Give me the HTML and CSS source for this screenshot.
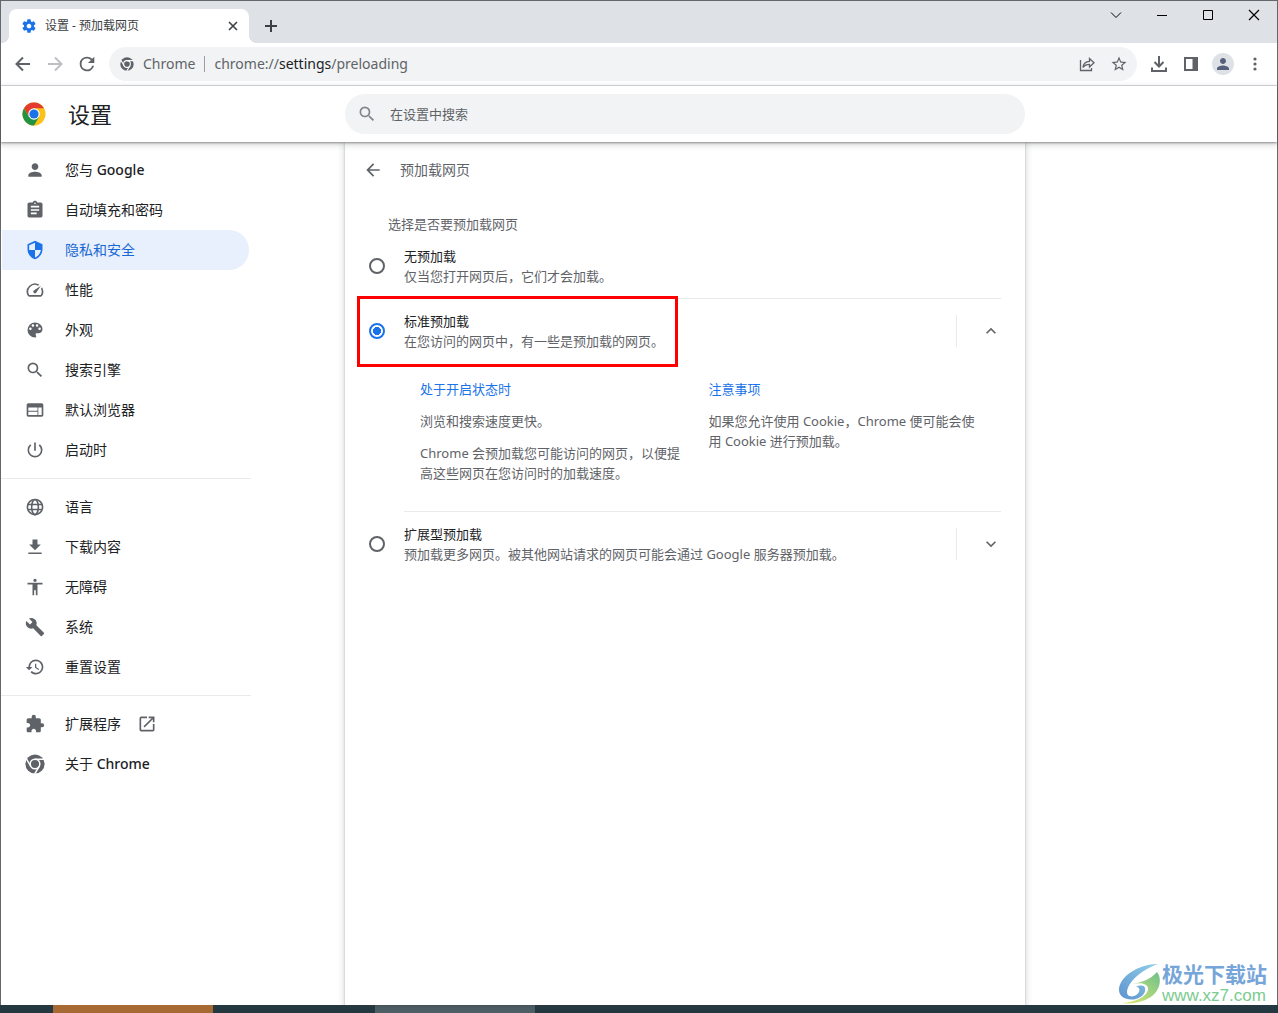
FILE: index.html
```html
<!DOCTYPE html>
<html lang="zh-CN">
<head>
<meta charset="utf-8">
<title>设置 - 预加载网页</title>
<link rel="stylesheet" href="styles.css">
</head>
<body>
<svg class="symbols" aria-hidden="true">
  <symbol id="chrome-mono" viewBox="0 0 20 20">
    <circle cx="10" cy="10" r="9.6"/>
    <g fill="none" stroke="#fff" stroke-width="1.5"><circle cx="10" cy="10" r="4.8"/><path d="M10 5.2h9M5.8 12.4L1.3 4.6M14.2 12.4L9.7 20"/></g>
  </symbol>
  <symbol id="search" viewBox="0 0 24 24"><path d="M15.5 14h-.79l-.28-.27A6.47 6.47 0 0 0 16 9.5 6.5 6.5 0 1 0 9.5 16c1.61 0 3.09-.59 4.23-1.57l.27.28v.79l5 4.99L20.49 19l-4.99-5zm-6 0C7.01 14 5 11.99 5 9.5S7.01 5 9.5 5 14 7.01 14 9.5 11.99 14 9.5 14z"/></symbol>
  <symbol id="back" viewBox="0 0 24 24"><path d="M20 11H7.83l5.59-5.59L12 4l-8 8 8 8 1.41-1.41L7.83 13H20v-2z"/></symbol>
  <symbol id="person" viewBox="0 0 24 24"><path d="M12 12c2.21 0 4-1.79 4-4s-1.79-4-4-4-4 1.79-4 4 1.79 4 4 4zm0 2c-2.67 0-8 1.34-8 4v2h16v-2c0-2.66-5.33-4-8-4z"/></symbol>
</svg>

<div class="window">
  <div class="tab-strip">
    <div class="tab">
      <svg class="tab-icon" viewBox="0 0 24 24"><path d="M19.43 12.98c.04-.32.07-.64.07-.98s-.03-.66-.07-.98l2.11-1.65c.19-.15.24-.42.12-.64l-2-3.46c-.12-.22-.39-.3-.61-.22l-2.49 1c-.52-.4-1.08-.73-1.69-.98l-.38-2.65A.49.49 0 0 0 14 2h-4c-.25 0-.46.18-.49.42l-.38 2.65c-.61.25-1.17.59-1.69.98l-2.49-1c-.23-.09-.49 0-.61.22l-2 3.46c-.13.22-.07.49.12.64l2.11 1.65c-.04.32-.07.65-.07.98s.03.66.07.98l-2.11 1.65c-.19.15-.24.42-.12.64l2 3.46c.12.22.39.3.61.22l2.49-1c.52.4 1.08.73 1.69.98l.38 2.65c.03.24.24.42.49.42h4c.25 0 .46-.18.49-.42l.38-2.65c.61-.25 1.17-.59 1.69-.98l2.49 1c.23.09.49 0 .61-.22l2-3.46c.12-.22.07-.49-.12-.64l-2.11-1.65zM12 15.5c-1.93 0-3.5-1.57-3.5-3.5s1.57-3.5 3.5-3.5 3.5 1.57 3.5 3.5-1.57 3.5-3.5 3.5z"/></svg>
      <span class="tab-title">设置 - 预加载网页</span>
      <button class="tab-close" aria-label="关闭标签页"><svg class="i16" viewBox="0 0 16 16"><path class="line" stroke-width="1.6" d="M4 4l8 8M12 4l-8 8"/></svg></button>
    </div>
    <button class="new-tab" aria-label="打开新的标签页"><svg class="i16" viewBox="0 0 16 16"><path class="line" stroke-width="2" d="M8 2v12M2 8h12"/></svg></button>
    <div class="window-controls">
      <button aria-label="搜索标签页"><svg class="i16" viewBox="0 0 16 16"><path class="line" d="M3 5.500l5 5 5-5"/></svg></button>
      <button aria-label="最小化"><svg class="i16" viewBox="0 0 16 16"><path class="line" d="M3 8.500h10"/></svg></button>
      <button aria-label="最大化"><svg class="i16" viewBox="0 0 16 16"><path class="line" d="M3.500 3.500h9v9h-9z"/></svg></button>
      <button aria-label="关闭"><svg class="i16" viewBox="0 0 16 16"><path class="line" stroke-width="1.200" d="M3 3l10 10M13 3L3 13"/></svg></button>
    </div>
  </div>

  <div class="toolbar">
    <button aria-label="后退"><svg class="i20" viewBox="0 0 20 20"><path class="line" stroke-width="2" d="M17 10H4M10 3.500L3.500 10l6.500 6.500"/></svg></button>
    <button class="disabled" aria-label="前进" disabled><svg class="i20" viewBox="0 0 20 20"><path class="line" stroke-width="2" d="M3 10h13M10 3.500l6.500 6.500-6.500 6.500"/></svg></button>
    <button aria-label="重新加载"><svg class="i22" viewBox="0 0 24 24"><path d="M17.65 6.35A7.96 7.96 0 0 0 12 4a8 8 0 1 0 7.73 10h-2.08A6 6 0 1 1 12 6c1.66 0 3.14.69 4.22 1.780L13 11h7V4l-2.35 2.350z"/></svg></button>
    <div class="omnibox">
      <svg class="i14" viewBox="0 0 20 20"><use href="#chrome-mono"/></svg>
      <span class="site">Chrome</span>
      <span class="url">chrome://<b>settings</b>/preloading</span>
      <button aria-label="分享此网页"><svg class="i18" viewBox="0 0 18 18"><path class="line" stroke-width="1.300" d="M2.500 5v10.500h11V13M5 12.500c.4-4 2.500-6 6.500-6.200V3.500L16 7.700 11.500 12V9.300C8.500 9.300 6.500 10.300 5 12.500z"/></svg></button>
      <button aria-label="为此标签页添加书签"><svg class="i18" viewBox="0 0 24 24"><path d="M22 9.240l-7.190-.62L12 2 9.190 8.630 2 9.240l5.460 4.730L5.820 21 12 17.270 18.180 21l-1.630-7.030L22 9.240zM12 15.400l-3.760 2.270 1-4.280-3.320-2.880 4.380-.38L12 6.100l1.710 4.040 4.380.38-3.320 2.880 1 4.280L12 15.400z"/></svg></button>
    </div>
    <button aria-label="下载内容"><svg class="i20" viewBox="0 0 20 20"><path class="line" stroke-width="2" d="M10 2v10M5.500 8l4.500 4.500L14.500 8M3 13.500V17h14v-3.500"/></svg></button>
    <button aria-label="侧边栏"><svg class="i16" viewBox="0 0 16 16"><path d="M1 1h14v14H1zM3 3v10h6.500V3z" fill-rule="evenodd"/></svg></button>
    <button aria-label="您"><span class="avatar"><svg class="i18" viewBox="0 0 24 24"><use href="#person"/></svg></span></button>
    <button aria-label="更多"><svg class="i16" viewBox="0 0 16 16"><circle cx="8" cy="3" r="1.600"/><circle cx="8" cy="8" r="1.600"/><circle cx="8" cy="13" r="1.600"/></svg></button>
  </div>

  <header class="page-header">
    <div class="brand">
      <svg class="i24" viewBox="0 0 24 24"><circle cx="12" cy="12" r="11.500" fill="#fbc116"/><path fill="#e33b2e" d="M2.040 6.250A11.500 11.500 0 0 1 21.960 6.250H12L7 14.900z"/><path fill="#229342" d="M2.040 6.250A11.500 11.500 0 0 0 12 23.500L17 14.900 7 14.900z"/><circle cx="12" cy="12" r="5.750" fill="#fff"/><circle cx="12" cy="12" r="4.600" fill="#1a73e8"/></svg>
      <h1>设置</h1>
    </div>
    <div class="search">
      <svg class="i20" viewBox="0 0 24 24"><use href="#search"/></svg>
      <input type="search" aria-label="在设置中搜索" placeholder="在设置中搜索">
    </div>
  </header>

  <div class="body">
    <nav class="sidebar">
      <a href="#people"><svg class="i20" viewBox="0 0 24 24"><use href="#person"/></svg><span>您与 <span class="latin">Google</span></span></a>
      <a href="#autofill"><svg class="i20" viewBox="0 0 24 24"><path d="M19 3h-4.180C14.400 1.840 13.300 1 12 1s-2.400.84-2.820 2H5c-1.100 0-2 .9-2 2v14c0 1.100.9 2 2 2h14c1.100 0 2-.9 2-2V5c0-1.100-.9-2-2-2zm-7 0c.55 0 1 .45 1 1s-.45 1-1 1-1-.45-1-1 .45-1 1-1zm2 14H7v-2h7v2zm3-4H7v-2h10v2zm0-4H7V7h10v2z"/></svg>自动填充和密码</a>
      <a href="#privacy" class="current" aria-current="page"><svg class="i20" viewBox="0 0 24 24"><path d="M12 1L3 5v6c0 5.550 3.840 10.740 9 12 5.160-1.260 9-6.450 9-12V5l-9-4zm0 10.990h7c-.53 4.120-3.280 7.790-7 8.940V12H5V6.300l7-3.110v8.800z"/></svg>隐私和安全</a>
      <a href="#performance"><svg class="i20" viewBox="0 0 24 24"><path d="M20.380 8.570l-1.230 1.850a8 8 0 0 1-.22 7.580H5.070A8 8 0 0 1 15.580 6.850l1.850-1.230A10 10 0 0 0 3.350 19a2 2 0 0 0 1.720 1h13.850a2 2 0 0 0 1.740-1 10 10 0 0 0-.27-10.440zm-9.790 6.840a2 2 0 0 0 2.830 0l5.660-8.490-8.490 5.660a2 2 0 0 0 0 2.830z"/></svg>性能</a>
      <a href="#appearance"><svg class="i20" viewBox="0 0 24 24"><path d="M12 3a9 9 0 0 0 0 18c.83 0 1.500-.67 1.500-1.500 0-.39-.15-.74-.39-1.010-.23-.26-.38-.61-.38-.99 0-.83.67-1.500 1.500-1.500H16c2.760 0 5-2.240 5-5 0-4.420-4.030-8-9-8zm-5.500 9c-.83 0-1.500-.67-1.500-1.500S5.670 9 6.500 9 8 9.670 8 10.500 7.330 12 6.500 12zm3-4C8.670 8 8 7.330 8 6.500S8.670 5 9.500 5s1.500.67 1.500 1.500S10.330 8 9.500 8zm5 0c-.83 0-1.500-.67-1.500-1.500S13.670 5 14.500 5s1.500.67 1.500 1.500S15.330 8 14.500 8zm3 4c-.83 0-1.500-.67-1.500-1.500S16.670 9 17.500 9s1.500.67 1.500 1.500-.67 1.500-1.500 1.500z"/></svg>外观</a>
      <a href="#search-engine"><svg class="i20" viewBox="0 0 24 24"><use href="#search"/></svg>搜索引擎</a>
      <a href="#default-browser"><svg class="i20" viewBox="0 0 24 24"><path d="M20 4H4c-1.100 0-1.990.9-1.990 2L2 18c0 1.100.9 2 2 2h16c1.100 0 2-.9 2-2V6c0-1.100-.9-2-2-2zm-5 14H4v-4h11v4zm0-5H4V9h11v4zm5 5h-4V9h4v9z"/></svg>默认浏览器</a>
      <a href="#on-startup"><svg class="i20" viewBox="0 0 24 24"><path d="M13 3h-2v10h2V3zm4.830 2.170l-1.420 1.420A6.920 6.920 0 0 1 19 12a7 7 0 1 1-11.420-5.420L6.170 5.170A8.930 8.930 0 0 0 3 12a9 9 0 0 0 18 0c0-2.740-1.230-5.180-3.170-6.830z"/></svg>启动时</a>
      <hr>
      <a href="#languages"><svg class="i20" viewBox="0 0 24 24"><g class="line" stroke-width="1.900"><circle cx="12" cy="12" r="9.100"/><ellipse cx="12" cy="12" rx="4" ry="9.100"/><path d="M3.800 9h16.400M3.800 15h16.400"/></g></svg>语言</a>
      <a href="#downloads"><svg class="i20" viewBox="0 0 24 24"><path d="M19 9h-4V3H9v6H5l7 7 7-7zM4 18.500v2h16v-2H4z"/></svg>下载内容</a>
      <a href="#accessibility"><svg class="i20" viewBox="0 0 24 24"><path d="M12 2c1.100 0 2 .9 2 2s-.9 2-2 2-2-.9-2-2 .9-2 2-2zm9 7h-6v13h-2v-6h-2v6H9V9H3V7h18v2z"/></svg>无障碍</a>
      <a href="#system"><svg class="i20" viewBox="0 0 24 24"><path d="M22.700 19l-9.100-9.100c.9-2.300.4-5-1.500-6.900-2-2-5-2.400-7.400-1.300L9 6 6 9 1.600 4.700C.4 7.100.9 10.100 2.900 12.100c1.900 1.900 4.600 2.400 6.900 1.500l9.100 9.100c.4.4 1 .4 1.400 0l2.300-2.300c.5-.4.5-1.100.1-1.400z"/></svg>系统</a>
      <a href="#reset"><svg class="i20" viewBox="0 0 24 24"><path d="M13 3a9 9 0 0 0-9 9H1l3.890 3.890.07.14L9 12H6a7 7 0 1 1 2.060 4.940l-1.420 1.420A9 9 0 1 0 13 3zm-1 5v5l4.280 2.540.72-1.210-3.500-2.080V8H12z"/></svg>重置设置</a>
      <hr>
      <a href="#extensions"><svg class="i20" viewBox="0 0 24 24"><path d="M20.500 11H19V7c0-1.100-.9-2-2-2h-4V3.500a2.500 2.500 0 0 0-5 0V5H4c-1.100 0-1.990.9-1.990 2v3.800H3.500c1.490 0 2.700 1.210 2.700 2.700s-1.210 2.700-2.700 2.700H2V20c0 1.100.9 2 2 2h3.800v-1.500c0-1.490 1.210-2.700 2.700-2.700s2.700 1.210 2.700 2.700V22H17c1.100 0 2-.9 2-2v-4h1.500a2.500 2.500 0 0 0 0-5z"/></svg>扩展程序<svg class="i20 external" viewBox="0 0 24 24"><path d="M19 19H5V5h7V3H5a2 2 0 0 0-2 2v14a2 2 0 0 0 2 2h14c1.100 0 2-.9 2-2v-7h-2v7zM14 3v2h3.590l-9.830 9.830 1.410 1.410L19 6.410V10h2V3h-7z"/></svg></a>
      <a href="#about"><svg class="i20" viewBox="0 0 20 20"><use href="#chrome-mono"/></svg><span>关于 <span class="latin">Chrome</span></span></a>
    </nav>

    <main class="card">
      <div class="subpage-header">
        <button aria-label="返回"><svg class="i20" viewBox="0 0 24 24"><use href="#back"/></svg></button>
        <h2>预加载网页</h2>
      </div>
      <fieldset>
        <legend>选择是否要预加载网页</legend>
        <div class="option">
          <input type="radio" name="preload" id="preload-off">
          <div class="option-row">
            <label for="preload-off"><strong>无预加载</strong><span>仅当您打开网页后，它们才会加载。</span></label>
          </div>
        </div>
        <div class="option highlighted">
          <input type="radio" name="preload" id="preload-standard" checked>
          <div class="option-row">
            <label for="preload-standard"><strong>标准预加载</strong><span>在您访问的网页中，有一些是预加载的网页。</span></label>
            <button class="expand" aria-label="收起" aria-expanded="true"><svg class="i20" viewBox="0 0 24 24"><path d="M12 8l-6 6 1.410 1.410L12 10.830l4.590 4.580L18 14z"/></svg></button>
          </div>
        </div>
        <div class="details">
          <section>
            <h3>处于开启状态时</h3>
            <p>浏览和搜索速度更快。</p>
            <p>Chrome 会预加载您可能访问的网页，以便提高这些网页在您访问时的加载速度。</p>
          </section>
          <section>
            <h3>注意事项</h3>
            <p>如果您允许使用 Cookie，Chrome 便可能会使用 Cookie 进行预加载。</p>
          </section>
        </div>
        <div class="option">
          <input type="radio" name="preload" id="preload-extended">
          <div class="option-row">
            <label for="preload-extended"><strong>扩展型预加载</strong><span>预加载更多网页。被其他网站请求的网页可能会通过 Google 服务器预加载。</span></label>
            <button class="expand" aria-label="展开" aria-expanded="false"><svg class="i20" viewBox="0 0 24 24"><path d="M16.590 8.590L12 13.170 7.410 8.590 6 10l6 6 6-6z"/></svg></button>
          </div>
        </div>
      </fieldset>
    </main>
  </div>

  <div class="watermark">
    <svg viewBox="0 0 44 42">
      <defs>
        <linearGradient id="swoosh-blue" x1="1" y1="0" x2="0" y2="1"><stop offset="0" stop-color="#8fd0e8"/><stop offset="1" stop-color="#5f93cf"/></linearGradient>
        <linearGradient id="swoosh-green" x1="1" y1="0" x2="0" y2="1"><stop offset="0" stop-color="#6cc08b"/><stop offset="1" stop-color="#e3ea70"/></linearGradient>
      </defs>
      <path fill="url(#swoosh-blue)" d="M40 1C20 1 1 14 1 27c0 7 8 11 17 9 7-2 10-7 9-11-1-3-5-3-9-1 3 0 4 2 3 5-2 4-8 6-11 3C6 27 15 10 40 1z"/>
      <path fill="url(#swoosh-green)" d="M15 21c7-2 12-3 17-6 3-2 5-4 7-6 4 5 4 13-1 20-6 8-20 13-34 11 14-1 24-6 26-13 1-6-6-8-15-6z"/>
    </svg>
    <div><span class="mark-name">极光下载站</span><span class="mark-url">www.xz7.com</span></div>
  </div>
</div>
<div class="taskbar"><span class="task active"></span><span class="task"></span></div>
</body>
</html>
```
FILE: styles.css
```css
*, *::before, *::after { box-sizing: border-box; }

body {
  margin: 0;
  min-height: 100vh;
  display: flex;
  flex-direction: column;
  background: #fff;
  color: #202124;
  font: 13px/20px "Noto Sans", "Noto Sans CJK SC", sans-serif;
}

.symbols { position: absolute; width: 0; height: 0; }
svg { fill: currentColor; flex: none; display: block; }
.line { fill: none; stroke: currentColor; }
.i14 { width: 14px; height: 14px; }
.i16 { width: 16px; height: 16px; }
.i18 { width: 18px; height: 18px; }
.i20 { width: 20px; height: 20px; }
.i22 { width: 22px; height: 22px; }
.i24 { width: 24px; height: 24px; }

button {
  display: flex;
  align-items: center;
  justify-content: center;
  padding: 0;
  border: 0;
  background: none;
  color: #5f6368;
  font: inherit;
}

.window {
  position: relative;
  flex: 1;
  display: flex;
  flex-direction: column;
  border: 1px solid #65676b;
  border-bottom: 0;
}

/* Tab strip */
.tab-strip {
  display: flex;
  align-items: flex-end;
  height: 42px;
  padding-left: 8px;
  background: #dee1e6;
}
.tab {
  position: relative;
  display: flex;
  align-items: center;
  width: 240px;
  height: 34px;
  padding: 0 8px 0 12px;
  border-radius: 8px 8px 0 0;
  background: #fff;
  font-size: 12px;
}
.tab::before, .tab::after {
  content: "";
  position: absolute;
  bottom: 0;
  width: 8px;
  height: 8px;
}
.tab::before { right: 100%; background: radial-gradient(circle at 0 0, transparent 8px, #fff 8px); }
.tab::after { left: 100%; background: radial-gradient(circle at 100% 0, transparent 8px, #fff 8px); }
.tab-icon { width: 16px; height: 16px; color: #1a73e8; }
.tab-title { flex: 1; margin-left: 8px; color: #3c4043; }
.tab-close { width: 16px; height: 16px; color: #3c4043; }
.new-tab { width: 28px; height: 34px; margin-left: 8px; color: #3c4043; }
.window-controls { display: flex; align-self: flex-start; margin-left: auto; }
.window-controls button { width: 46px; height: 28px; color: #000; }

/* Toolbar */
.toolbar {
  display: flex;
  align-items: center;
  height: 43px;
  padding: 0 6px;
  border-bottom: 1px solid #dadce0;
}
.toolbar button { width: 32px; height: 32px; color: #5f6368; }
.toolbar .disabled { color: #bdbfc2; }
.omnibox {
  flex: 1;
  display: flex;
  align-items: center;
  height: 34px;
  margin: 0 6px;
  padding: 0 2px 0 11px;
  border-radius: 17px;
  background: #f1f3f4;
  color: #5f6368;
  font-size: 14px;
}
.site { margin-left: 9px; padding-right: 9px; border-right: 1px solid #9aa0a6; line-height: 16px; }
.url { flex: 1; padding-left: 9px; }
.url b { color: #202124; font-weight: 400; }
.avatar {
  display: flex;
  align-items: center;
  justify-content: center;
  width: 22px;
  height: 22px;
  border-radius: 50%;
  background: #dee1e6;
  color: #56607a;
}

/* Settings header and body share one column grid */
.page-header, .body {
  display: grid;
  grid-template-columns: minmax(252px, 344fr) minmax(0, 680px) minmax(0, 252fr);
}
.page-header {
  position: relative;
  z-index: 1;
  align-items: center;
  height: 56px;
  background: #fff;
  box-shadow: 0 1px 2px rgba(60, 64, 67, .5), 0 2px 6px 1px rgba(60, 64, 67, .2);
}
.brand { display: flex; align-items: center; padding-left: 21px; }
h1 { margin: 0 0 0 22px; font-size: 22px; line-height: 32px; font-weight: 400; }
.search {
  display: flex;
  align-items: center;
  height: 40px;
  padding: 0 12px;
  border-radius: 20px;
  background: #f1f3f4;
  color: #80868b;
}
.search input {
  flex: 1;
  margin-left: 13px;
  padding: 0;
  border: 0;
  outline: 0;
  background: none;
  font: inherit;
}
.search input::placeholder { color: #5f6368; }
.body { flex: 1; }

/* Sidebar */
.sidebar { width: 250px; padding-top: 8px; }
.sidebar a {
  display: flex;
  align-items: center;
  height: 40px;
  margin: 0 2px 0 1px;
  padding-left: 23px;
  border-radius: 0 20px 20px 0;
  color: #202124;
  font-size: 14px;
  text-decoration: none;
}
.latin { font-weight: 500; }
.sidebar svg { margin-right: 20px; color: #5f6368; }
.sidebar .external { margin: 0 0 0 16px; }
.sidebar .current { background: #e8f0fe; color: #1967d2; }
.sidebar .current svg { color: #1a73e8; }
.sidebar hr { margin: 8px 0; border: 0; border-top: 1px solid #e8eaed; }

/* Content card */
.card {
  padding: 8px 24px 0;
  background: #fff;
  box-shadow: 0 1px 2px rgba(60, 64, 67, .3), 0 2px 6px 2px rgba(60, 64, 67, .15);
}
.subpage-header { display: flex; align-items: center; height: 40px; margin-left: -6px; }
h2 { margin: 0 0 0 17px; color: #5f6368; font-size: 14px; font-weight: 400; }
fieldset { min-width: 0; margin: 24px 0 0; padding: 0; border: 0; }
legend { padding: 0 0 0 19px; color: #5f6368; }

.option { position: relative; display: flex; align-items: center; }
.option input {
  appearance: none;
  flex: none;
  width: 16px;
  height: 16px;
  margin: 0 19px 0 0;
  border: 2px solid #5f6368;
  border-radius: 50%;
}
.option input:checked {
  border-color: #1a73e8;
  background: radial-gradient(circle, #1a73e8 4px, transparent 4px);
}
.option-row { flex: 1; display: flex; align-items: center; height: 64px; }
.option ~ .option .option-row { height: 65px; border-top: 1px solid #e8eaed; }
.option label { flex: 1; display: flex; flex-direction: column; }
.option strong { font-weight: 400; }
.option span { color: #5f6368; }
.expand {
  justify-content: flex-end;
  width: 45px;
  height: 32px;
  border-left: 1px solid #e8eaed;
}
.highlighted::after {
  content: "";
  position: absolute;
  inset: -2px auto -4px -12px;
  width: 321px;
  border: 3px solid #ff0000;
  pointer-events: none;
}

.details {
  display: grid;
  grid-template-columns: 1fr 1fr;
  gap: 20px;
  padding: 16px 24px 28px 51px;
}
.details h3 { margin: 0; color: #1a73e8; font-size: 13px; font-weight: 400; }
.details p { margin: 12px 0 0; color: #5f6368; }

/* Site mark in the corner, over the page */
.watermark {
  position: absolute;
  right: 10px;
  bottom: 0;
  display: flex;
  align-items: flex-end;
}
.watermark svg { width: 44px; height: 42px; }
.watermark span { display: block; }
.mark-name { color: #76a5d9; font: 700 21px/28px "Noto Sans CJK SC", sans-serif; }
.mark-url { color: #7acb90; font: 17px/18px "Liberation Sans", sans-serif; }

/* Taskbar */
.taskbar { display: flex; gap: 162px; height: 8px; padding-left: 53px; background: #233841; }
.task { width: 160px; background: #4f6067; }
.task.active { background: #a76a33; }
```
